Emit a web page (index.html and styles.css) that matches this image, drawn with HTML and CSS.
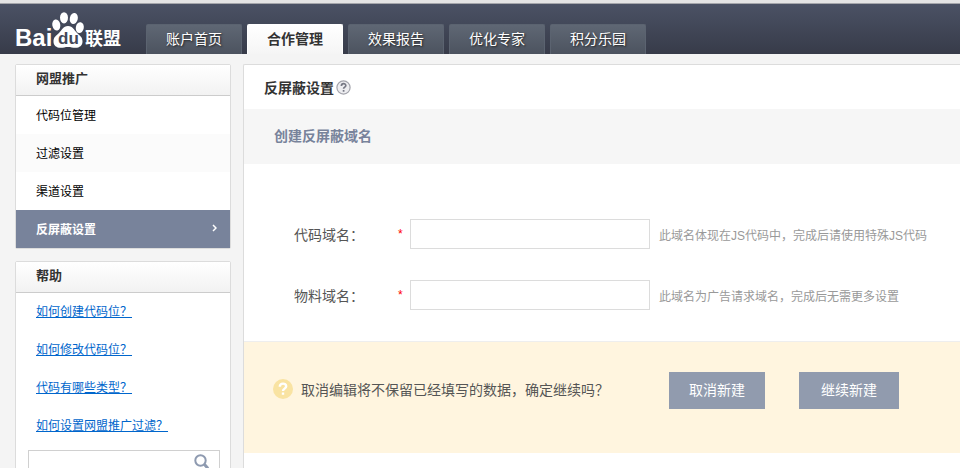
FILE: index.html
```html
<!DOCTYPE html>
<html lang="zh-CN">
<head>
    <meta charset="UTF-8">
    <meta name="viewport" content="width=device-width, initial-scale=1.0">
    <title>百度联盟 - 反屏蔽设置</title>
    <link rel="stylesheet" href="styles.css">
</head>
<body>
    <header class="header">
        <a class="logo" href="#" aria-label="百度联盟">
            <svg width="110" height="42" viewBox="0 0 110 42">
                <g fill="#fff">
                    <text class="logo-latin" x="0" y="34">Bai</text>
                    <!-- paw -->
                    <ellipse cx="41.3" cy="13" rx="4" ry="5.5" transform="rotate(-12 41.3 13)"/>
                    <ellipse cx="49" cy="5.8" rx="4" ry="5.6"/>
                    <ellipse cx="58.8" cy="6.5" rx="4" ry="5.6" transform="rotate(12 58.8 6.5)"/>
                    <ellipse cx="64.8" cy="15.6" rx="4" ry="5.5" transform="rotate(10 64.8 15.6)"/>
                    <path d="M53 14c-5 0-6 4-9 7-3 3-5.500 4-5.500 8.500 0 4 3 6.300 7 6.300 3 0 4.500-.8 7.500-.8s4.500.8 7.500.8c4 0 7-2.300 7-6.300 0-4.500-2.500-5.500-5.500-8.500-3-3-4-7-9-7z"/>
                    <text class="logo-cjk" x="70" y="33">联盟</text>
                </g>
                <text class="logo-du" x="43" y="32">du</text>
            </svg>
        </a>
        <nav class="nav">
            <a href="#">账户首页</a>
            <a class="active" href="#">合作管理</a>
            <a href="#">效果报告</a>
            <a href="#">优化专家</a>
            <a href="#">积分乐园</a>
        </nav>
    </header>

    <div class="page">
        <aside class="sidebar">
            <section class="panel">
                <h2>网盟推广</h2>
                <ul class="menu">
                    <li><a href="#">代码位管理</a></li>
                    <li><a href="#">过滤设置</a></li>
                    <li><a href="#">渠道设置</a></li>
                    <li>
                        <a class="active" href="#">反屏蔽设置
                            <svg width="5" height="8" viewBox="0 0 5 8"><path d="M1 1l3 3-3 3" fill="none" stroke="#fff" stroke-width="1.5"/></svg>
                        </a>
                    </li>
                </ul>
            </section>

            <section class="panel">
                <h2>帮助</h2>
                <ul class="help">
                    <li><a href="#">如何创建代码位？</a></li>
                    <li><a href="#">如何修改代码位？</a></li>
                    <li><a href="#">代码有哪些类型？</a></li>
                    <li><a href="#">如何设置网盟推广过滤？</a></li>
                </ul>
                <form class="search">
                    <input type="text" aria-label="搜索帮助">
                    <button type="button" aria-label="搜索">
                        <svg width="16" height="16" viewBox="0 0 16 16" fill="none" stroke="#8e9ab0">
                            <circle cx="6.500" cy="6.500" r="5.200" stroke-width="2"/>
                            <path d="M10.500 10.500l3.500 4" stroke-width="3"/>
                        </svg>
                    </button>
                </form>
            </section>
        </aside>

        <main class="content">
            <h1>
                反屏蔽设置
                <svg class="tip" width="15" height="15" viewBox="0 0 15 15">
                    <circle cx="7.5" cy="7.5" r="6.6" fill="#ededf0" stroke="#a2a3ab" stroke-width="1.2"/>
                    <path d="M5.4 6c0-3 4.400-3 4.400-.4 0 1.600-2.200 1.500-2.200 3.200M7.600 10v1.800" fill="none" stroke="#777985" stroke-width="1.7"/>
                </svg>
            </h1>
            <h2 class="subtitle">创建反屏蔽域名</h2>

            <form class="domain-form">
                <div class="row">
                    <label for="code-domain">代码域名：</label>
                    <span class="required">*</span>
                    <input type="text" id="code-domain">
                    <span class="hint">此域名体现在JS代码中，完成后请使用特殊JS代码</span>
                </div>
                <div class="row">
                    <label for="material-domain">物料域名：</label>
                    <span class="required">*</span>
                    <input type="text" id="material-domain">
                    <span class="hint">此域名为广告请求域名，完成后无需更多设置</span>
                </div>
            </form>

            <div class="confirm">
                <svg width="20" height="20" viewBox="0 0 20 20">
                    <circle cx="10" cy="10" r="10" fill="#f9e3a2"/>
                    <path d="M6.8 7.8c0-4.200 6.400-4.200 6.400-.5 0 2.300-3.200 2.300-3.200 4.700M10 13.400v2.400" fill="none" stroke="#fff" stroke-width="2.4"/>
                </svg>
                <p>取消编辑将不保留已经填写的数据，确定继续吗？</p>
                <button class="cancel" type="button">取消新建</button>
                <button class="continue" type="button">继续新建</button>
            </div>
        </main>
    </div>
</body>
</html>
```
FILE: styles.css
```css
* {
    box-sizing: border-box;
}

body {
    margin: 0;
    height: 100vh;
    overflow: hidden;
    display: flex;
    flex-direction: column;
    background: #f4f4f4;
    color: #555;
    font-family: "Liberation Sans", "Noto Sans CJK SC", sans-serif;
    font-size: 12px;
}

h1, h2, p, ul {
    margin: 0;
    padding: 0;
}

ul {
    list-style: none;
}

/* header */
.header {
    flex: none;
    display: flex;
    align-items: flex-end;
    height: 54px;
    padding-left: 15px;
    border-top: 3px solid #e4e4e4;
    background: linear-gradient(#4b5265, #373b49);
    box-shadow: inset 0 1px #a5a6ab;
}

.logo {
    width: 131px;
    height: 42px;
}

.logo svg {
    display: block;
}

.logo-latin {
    font: bold 24px "Liberation Sans", sans-serif;
}

.logo-cjk {
    font: bold 18px "Noto Sans CJK SC", sans-serif;
}

.logo-du {
    font: bold 17px "Liberation Sans", sans-serif;
    fill: #434859;
}

.nav {
    display: flex;
    gap: 5px;
}

.nav a {
    width: 96px;
    height: 30px;
    line-height: 28px;
    border: solid #5b6370;
    border-width: 1px 1px 0;
    border-radius: 2px 2px 0 0;
    background: linear-gradient(#5f6774, #4c535f);
    color: #fff;
    font-size: 14px;
    text-align: center;
    text-decoration: none;
    text-shadow: 1px 1px 2px #222;
}

.nav a.active {
    border-color: #fff;
    background: linear-gradient(#fff, #f5f5f5);
    color: #333;
    font-weight: bold;
    text-shadow: none;
}

/* columns */
.page {
    flex: 1;
    min-height: 0;
    display: flex;
    gap: 12px;
    padding: 10px 0 0 15px;
}

.sidebar {
    flex: none;
    width: 216px;
}

.panel {
    margin-bottom: 12px;
    border: 1px solid #dcdcdc;
    border-radius: 2px;
    background: #fff;
}

.panel h2 {
    height: 31px;
    padding-left: 20px;
    border-bottom: 1px solid #ccc;
    background: linear-gradient(#fff, #f2f2f2);
    color: #333;
    font-size: 13px;
    line-height: 28px;
}

.menu a {
    display: flex;
    align-items: center;
    justify-content: space-between;
    height: 38px;
    padding: 0 13px 2px 20px;
    color: #000;
    text-decoration: none;
}

.menu li:nth-child(2) {
    background: #fbfbfb;
}

.menu a.active {
    background: #78839b;
    color: #fff;
    font-weight: bold;
}

.help li {
    height: 38px;
    padding-left: 20px;
    line-height: 38px;
}

.help a {
    color: #06c;
}

.search {
    display: flex;
    height: 30px;
    margin: 5px 10px 12px 12px;
    border: 1px solid #d0d0d0;
}

.search input {
    flex: 1;
    min-width: 0;
    border: 0;
}

.search button {
    display: flex;
    padding: 3px 9px;
    border: 0;
    background: none;
}

/* main column */
.content {
    flex: 1;
    min-width: 0;
    border: 1px solid #dcdcdc;
    border-width: 1px 0 0 1px;
    border-radius: 2px 0 0 0;
    background: #fff;
}

.content h1 {
    display: flex;
    align-items: center;
    gap: 2px;
    height: 44px;
    padding-left: 20px;
    color: #333;
    font-size: 14px;
}

.subtitle {
    height: 55px;
    padding-left: 30px;
    background: #f6f6f6;
    color: #78839b;
    font-size: 14px;
    line-height: 55px;
}

.domain-form {
    display: grid;
    gap: 31px;
    padding: 55px 0 31px 50px;
}

.row {
    display: flex;
    align-items: center;
    white-space: nowrap;
}

.row label {
    width: 104px;
    font-size: 14px;
}

.required {
    width: 12px;
    color: #f00;
}

.row input {
    width: 240px;
    height: 30px;
    border: 1px solid #dcdcdc;
}

.hint {
    margin-left: 9px;
    color: #999;
}

.confirm {
    display: flex;
    align-items: center;
    height: 112px;
    padding: 0 0 14px 29px;
    border-top: 1px solid #eee;
    background: #fff5df;
    font-size: 14px;
    white-space: nowrap;
}

.confirm svg {
    margin-bottom: 4px;
}

.confirm p {
    width: 368px;
    margin-left: 8px;
    padding-bottom: 4px;
}

.confirm button {
    height: 37px;
    padding: 0 0 3px;
    border: 0;
    background: #919bae;
    color: #fff;
    font-family: inherit;
    font-size: 14px;
}

.confirm .cancel {
    width: 96px;
}

.confirm .continue {
    width: 100px;
    margin-left: 34px;
}
```
